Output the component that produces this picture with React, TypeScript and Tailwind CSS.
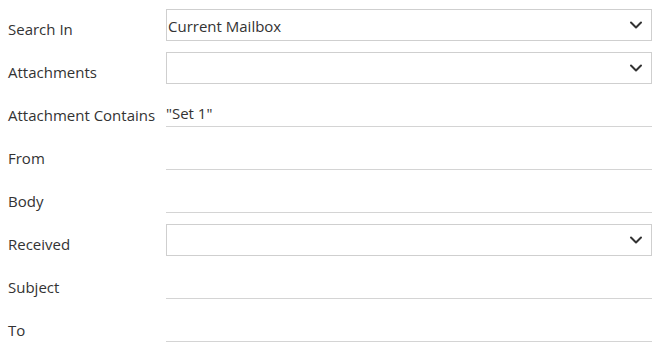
import { ChevronDown } from 'lucide-react'

type Field = { label: string; kind: 'select' | 'text'; value?: string }

const fields: Field[] = [
  { label: 'Search In', kind: 'select', value: 'Current Mailbox' },
  { label: 'Attachments', kind: 'select' },
  { label: 'Attachment Contains', kind: 'text', value: '"Set 1"' },
  { label: 'From', kind: 'text' },
  { label: 'Body', kind: 'text' },
  { label: 'Received', kind: 'select' },
  { label: 'Subject', kind: 'text' },
  { label: 'To', kind: 'text' },
]

export default function App() {
  return (
    <div
      className="w-[658px] h-[357px] bg-white text-[#333] text-[15px] flex flex-col gap-[11px] pt-[9px] overflow-hidden"
      style={{ fontFamily: '"Open Sans", "Noto Sans", sans-serif' }}
    >
      {fields.map((f) => (
        <div key={f.label} className="flex h-8 items-end">
          <div className="w-[166px] pl-2 pb-[2px] leading-5 whitespace-nowrap">{f.label}</div>
          {f.kind === 'select' ? (
            <div className="w-[486px] h-8 border border-[#cfcfcf] flex items-center justify-between pl-px pr-[5px]">
              <span className="leading-5 mt-[2px]">{f.value ?? ''}</span>
              <ChevronDown className="w-5 h-5 text-[#333]" strokeWidth={2.4} />
            </div>
          ) : (
            <div className="w-[486px] h-8 border-b border-[#d4d4d4] flex items-end pb-[3px]">
              <span className="leading-5">{f.value ?? ''}</span>
            </div>
          )}
        </div>
      ))}
    </div>
  )
}
